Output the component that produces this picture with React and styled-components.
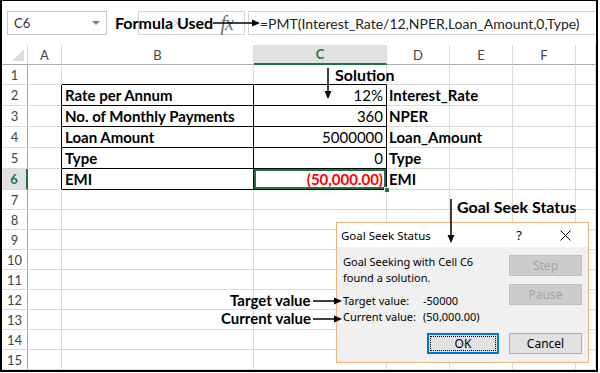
import React from 'react';
import styled, { createGlobalStyle } from 'styled-components';

const Global = createGlobalStyle`
  html, body { margin: 0; padding: 0; background: #fff; }
  body { font-family: "Lato", "Liberation Sans", sans-serif; }
  * { box-sizing: border-box; }
`;

const CELL_FONT = `"Lato", "Liberation Sans", sans-serif`;
const UI_FONT = `"Noto Sans", "Open Sans", sans-serif`;
const GREEN = '#217346';
const GRID = '#dadada';

const Frame = styled.div`
  position: relative;
  width: 598px;
  height: 372px;
  border: 2px solid #000;
  border-top-width: 1px;
  overflow: hidden;
  display: flex;
  flex-direction: column;
  background: #fff;
`;

const FormulaBar = styled.div`
  display: flex;
  align-items: stretch;
  height: 24px;
  margin: 10px 0 10px 5px;
`;

const NameBox = styled.div`
  width: 100px;
  border: 1px solid #c6c6c6;
  display: flex;
  align-items: center;
  justify-content: space-between;
  padding: 0 6px 0 6px;
  font-family: ${CELL_FONT};
  font-size: 13px;
  color: #333;
`;

const DropTri = styled.span`
  width: 0;
  height: 0;
  border-left: 4px solid transparent;
  border-right: 4px solid transparent;
  border-top: 4px solid #808080;
`;

const FxBox = styled.div`
  width: 107px;
  margin-left: 31px;
  border: 1px solid #d4d4d4;
  display: flex;
  align-items: center;
  justify-content: flex-end;
  gap: 14px;
  padding-right: 11px;
`;

const FaintIcon = styled.svg`
  flex: none;
`;

const Fx = styled.span`
  font-family: "Liberation Serif", serif;
  font-style: italic;
  font-size: 20px;
  color: #6e6e6e;
  letter-spacing: -1px;
`;

const FormulaInput = styled.div`
  flex: 1;
  margin-left: 3px;
  border: 1px solid #d4d4d4;
  border-right: none;
  display: flex;
  align-items: center;
  padding-left: 11px;
  font-family: ${CELL_FONT};
  font-size: 14px;
  color: #222;
  white-space: nowrap;
`;

const Grid = styled.div`
  display: grid;
  grid-template-columns: 26px 34px 192px 133px 63px 63px 63px 1fr;
  grid-template-rows: 20px 20px repeat(5, 21px) repeat(9, 20px);
`;

const Corner = styled.div`
  position: relative;
  border-right: 1px solid ${GRID};
  border-bottom: 1px solid #ababab;
`;

const CornerTri = styled.span`
  position: absolute;
  right: 3px;
  bottom: 3px;
  width: 0;
  height: 0;
  border-left: 12px solid transparent;
  border-bottom: 12px solid #dcdcdc;
`;

const ColHead = styled.div`
  display: flex;
  align-items: center;
  justify-content: center;
  font-family: ${CELL_FONT};
  font-size: 13px;
  color: ${p => (p.$active ? GREEN : '#444')};
  font-weight: ${p => (p.$active ? 700 : 400)};
  background: ${p => (p.$active ? '#e1e1e1' : '#fff')};
  border-right: 1px solid ${GRID};
  border-bottom: ${p => (p.$active ? `2px solid ${GREEN}` : '1px solid #ababab')};
`;

const RowHead = styled.div`
  display: flex;
  align-items: center;
  justify-content: center;
  font-family: ${CELL_FONT};
  font-size: 13px;
  color: ${p => (p.$active ? GREEN : '#444')};
  font-weight: ${p => (p.$active ? 700 : 400)};
  background: ${p => (p.$active ? '#e1e1e1' : '#fff')};
  border-right: ${p => (p.$active ? `2px solid ${GREEN}` : '1px solid #ababab')};
  border-bottom: 1px solid ${GRID};
`;

const Cell = styled.div`
  position: relative;
  display: flex;
  align-items: center;
  justify-content: ${p => (p.$align === 'right' ? 'flex-end' : 'flex-start')};
  padding: ${p => (p.$align === 'right' ? '0 3px 0 0' : `0 0 0 ${p.$pad || 3}px`)};
  font-family: ${CELL_FONT};
  font-size: 15px;
  font-weight: ${p => (p.$regular ? 400 : 700)};
  color: ${p => p.$color || '#000'};
  white-space: nowrap;
  border-right: 1px solid ${p => p.$right || GRID};
  border-bottom: 1px solid ${p => p.$bottom || GRID};
  box-shadow: ${p => (p.$selected ? `inset 0 0 0 2px ${GREEN}` : 'none')};
  overflow: visible;
`;

const Handle = styled.span`
  position: absolute;
  right: -4px;
  bottom: -4px;
  width: 6px;
  height: 6px;
  background: ${GREEN};
  border: 1px solid #fff;
  z-index: 2;
`;

const Note = styled.div`
  position: absolute;
  left: ${p => p.$x}px;
  top: ${p => p.$y}px;
  font-family: "Lato", "Liberation Sans", sans-serif;
  font-weight: 700;
  font-size: ${p => p.$size || 16}px;
  line-height: 14px;
  color: #000;
  white-space: nowrap;
  z-index: 5;
`;

const Arrow = styled.svg`
  position: absolute;
  left: ${p => p.$x}px;
  top: ${p => p.$y}px;
  overflow: visible;
  z-index: 5;
`;

const Dialog = styled.div`
  position: absolute;
  left: 334px;
  top: 221px;
  width: 253px;
  height: 141px;
  border: 1px solid #eeb37c;
  background: #f0f0f0;
  display: flex;
  flex-direction: column;
  z-index: 4;
  font-family: ${UI_FONT};
  font-size: 11px;
  color: #000;
`;

const TitleBar = styled.div`
  height: 24px;
  background: #fff;
  display: flex;
  align-items: center;
  padding-left: 4px;
  font-size: 11.5px;
`;

const Title = styled.span`
  flex: 1;
`;

const TitleBtn = styled.span`
  width: 46px;
  display: flex;
  align-items: center;
  justify-content: center;
  font-size: 13px;
`;

const Body = styled.div`
  flex: 1;
  display: flex;
  flex-direction: column;
  padding: 7px 6px 8px 6px;
`;

const Top = styled.div`
  display: flex;
  justify-content: space-between;
`;

const Msg = styled.div`
  line-height: 16px;
`;

const Values = styled.div`
  display: grid;
  grid-template-columns: 80px auto;
  line-height: 16px;
  margin-top: 7px;
`;

const BtnCol = styled.div`
  display: flex;
  flex-direction: column;
  gap: 8px;
  margin-top: 1px;
`;

const Button = styled.div`
  width: ${p => p.$w || 73}px;
  height: 21px;
  display: flex;
  align-items: center;
  justify-content: center;
  background: ${p => (p.$disabled ? '#cccccc' : '#e1e1e1')};
  border: ${p => (p.$primary ? '2px solid #0078d7' : `1px solid ${p.$disabled ? '#bfbfbf' : '#adadad'}`)};
  color: ${p => (p.$disabled ? '#a3a3a3' : '#000')};
  font-size: 12px;
`;

const Focus = styled.span`
  flex: 1;
  align-self: stretch;
  margin: 1px;
  border: 1px dotted #000;
  display: flex;
  align-items: center;
  justify-content: center;
`;

const Footer = styled.div`
  margin-top: auto;
  display: flex;
  justify-content: flex-end;
  gap: 10px;
`;

const cols = ['A', 'B', 'C', 'D', 'E', 'F', 'G'];
const table = {
  2: ['Rate per Annum', '12%', 'Interest_Rate'],
  3: ['No. of Monthly Payments', '360', 'NPER'],
  4: ['Loan Amount', '5000000', 'Loan_Amount'],
  5: ['Type', '0', 'Type'],
  6: ['EMI', '(50,000.00)', 'EMI'],
};

function RowCells({ r }) {
  const t = table[r];
  const inTable = !!t;
  const black = '#000';
  return cols.map(c => {
    const key = `${c}${r}`;
    if (c === 'A') return <Cell key={key} $right={inTable ? black : undefined} />;
    if (c === 'B')
      return (
        <Cell key={key} $right={inTable ? black : undefined} $bottom={inTable || r === 1 ? black : undefined}>
          {t ? t[0] : ''}
        </Cell>
      );
    if (c === 'C')
      return (
        <Cell
          key={key}
          $align="right"
          $regular={r !== 6}
          $right={inTable ? black : undefined}
          $bottom={inTable || r === 1 ? black : undefined}
          $color={r === 6 ? '#ff0000' : undefined}
          $selected={r === 6}
        >
          {t ? t[1] : ''}
          {r === 6 && <Handle />}
        </Cell>
      );
    if (c === 'D') return <Cell key={key} $pad={2}>{t ? t[2] : ''}</Cell>;
    return <Cell key={key} />;
  });
}

const HArrow = ({ x, y, w }) => (
  <Arrow $x={x} $y={y - 5} width={w} height={10}>
    <line x1="0" y1="5" x2={w - 2} y2="5" stroke="#000" strokeWidth="1.5" />
    <path d={`M${w - 8} 1.5 L${w} 5 L${w - 8} 8.5 Z`} fill="#000" />
  </Arrow>
);

const VArrow = ({ x, y, h }) => (
  <Arrow $x={x - 5} $y={y} width={10} height={h}>
    <line x1="5" y1="0" x2="5" y2={h - 2} stroke="#000" strokeWidth="1.5" />
    <path d={`M1.5 ${h - 8} L5 ${h} L8.5 ${h - 8} Z`} fill="#000" />
  </Arrow>
);

export default function App() {
  const rows = Array.from({ length: 15 }, (_, i) => i + 1);
  return (
    <>
      <Global />
      <Frame>
        <FormulaBar>
          <NameBox>
            <span>C6</span>
            <DropTri />
          </NameBox>
          <FxBox>
            <FaintIcon width="10" height="10" viewBox="0 0 10 10">
              <path d="M1 1 L9 9 M9 1 L1 9" stroke="#d6d6d6" strokeWidth="1.4" />
            </FaintIcon>
            <FaintIcon width="11" height="10" viewBox="0 0 11 10">
              <path d="M1 5.5 L4 8.5 L10 1.5" stroke="#d6d6d6" strokeWidth="1.4" fill="none" />
            </FaintIcon>
            <Fx>fx</Fx>
          </FxBox>
          <FormulaInput>=PMT(Interest_Rate/12,NPER,Loan_Amount,0,Type)</FormulaInput>
        </FormulaBar>
        <Grid>
          <Corner>
            <CornerTri />
          </Corner>
          {cols.map(c => (
            <ColHead key={c} $active={c === 'C'}>
              {c === 'G' ? '' : c}
            </ColHead>
          ))}
          {rows.map(r => (
            <React.Fragment key={r}>
              <RowHead $active={r === 6}>{r}</RowHead>
              <RowCells r={r} />
            </React.Fragment>
          ))}
        </Grid>

        <Note $x={113} $y={15}>Formula Used</Note>
        <HArrow x={211} y={22} w={47} />

        <Note $x={333} $y={67}>Solution</Note>
        <VArrow x={326} y={67} h={31} />

        <Note $x={455} $y={199}>Goal Seek Status</Note>
        <VArrow x={449} y={198} h={44} />

        <Note $x={228} $y={292} $size={15}>Target value</Note>
        <HArrow x={311} y={300} w={29} />
        <Note $x={219} $y={310} $size={15}>Current value</Note>
        <HArrow x={311} y={318} w={29} />

        <Dialog>
          <TitleBar>
            <Title>Goal Seek Status</Title>
            <TitleBtn>?</TitleBtn>
            <TitleBtn>
              <svg width="11" height="11" viewBox="0 0 11 11">
                <path d="M0.5 0.5 L10.5 10.5 M10.5 0.5 L0.5 10.5" stroke="#000" strokeWidth="1" />
              </svg>
            </TitleBtn>
          </TitleBar>
          <Body>
            <Top>
              <div>
                <Msg>
                  Goal Seeking with Cell C6
                  <br />
                  found a solution.
                </Msg>
                <Values>
                  <span>Target value:</span>
                  <span>-50000</span>
                  <span>Current value:</span>
                  <span>(50,000.00)</span>
                </Values>
              </div>
              <BtnCol>
                <Button $disabled>Step</Button>
                <Button $disabled>Pause</Button>
              </BtnCol>
            </Top>
            <Footer>
              <Button $primary $w={72}>
                <Focus>OK</Focus>
              </Button>
              <Button>Cancel</Button>
            </Footer>
          </Body>
        </Dialog>
      </Frame>
    </>
  );
}
